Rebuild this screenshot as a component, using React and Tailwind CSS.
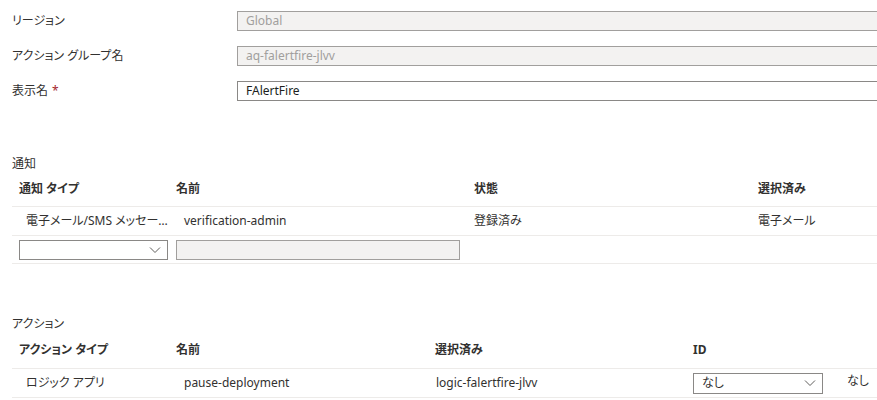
import React from 'react';

const font = "font-['Noto_Sans','Noto_Sans_CJK_JP',sans-serif] [font-feature-settings:'palt']";

function Chevron() {
  return (
    <svg width="12" height="8" viewBox="0 0 12 8" className="shrink-0">
      <path d="M1 1.5 L6 6.5 L11 1.5" fill="none" stroke="#605e5c" strokeWidth="1" />
    </svg>
  );
}

function FormRow({ label, value, disabled, required }) {
  return (
    <div className="flex items-center h-5">
      <div className="w-[237px] shrink-0 pl-3 text-[12px] text-[#323130]">
        {label}
        {required && <span className="text-[#a4262c] ml-1">*</span>}
      </div>
      <div
        className={
          'h-5 w-[680px] shrink-0 border flex items-center pl-[8px] text-[12px] ' +
          (disabled
            ? 'bg-[#f3f2f1] border-[#a19f9d] text-[#a19f9d]'
            : 'bg-white border-[#8a8886] text-[#201f1e]')
        }
      >
        {value}
      </div>
    </div>
  );
}

export default function App() {
  return (
    <div className={`w-[877px] h-[400px] overflow-hidden bg-white text-[#323130] ${font}`}>
      {/* 基本情報 */}
      <div className="pt-[11px] flex flex-col gap-[15px]">
        <FormRow label="リージョン" value="Global" disabled />
        <FormRow label="アクション グループ名" value="aq-falertfire-jlvv" disabled />
        <FormRow label="表示名" value="FAlertFire" required />
      </div>

      {/* 通知 */}
      <div className="mt-[55px] pl-3 h-4 flex items-center text-[12px]">通知</div>
      <div className="ml-3 text-[12px]">
        <div className="grid grid-cols-[157px_298px_284px_1fr] h-[35px] items-center border-b border-[#edebe9] font-bold">
          <div className="pl-[7px]">通知 タイプ</div>
          <div className="pl-[7px]">名前</div>
          <div className="pl-[7px]">状態</div>
          <div className="pl-[7px]">選択済み</div>
        </div>
        <div className="grid grid-cols-[157px_298px_284px_1fr] h-[29px] items-center border-b border-[#edebe9]">
          <div className="pl-[14px] truncate">電子メール/SMS メッセー…</div>
          <div className="pl-[15px]">verification-admin</div>
          <div className="pl-[7px]">登録済み</div>
          <div className="pl-[7px]">電子メール</div>
        </div>
        <div className="grid grid-cols-[157px_298px_284px_1fr] h-[28px] items-center border-b border-[#edebe9]">
          <div className="pl-[7px]">
            <div className="w-[149px] h-5 border border-[#8a8886] bg-white flex items-center justify-end pr-[6px]">
              <Chevron />
            </div>
          </div>
          <div className="pl-[7px]">
            <div className="w-[284px] h-5 border border-[#a19f9d] bg-[#f3f2f1]" />
          </div>
          <div />
          <div />
        </div>
      </div>

      {/* アクション */}
      <div className="mt-[52px] pl-3 h-4 flex items-center text-[12px]">アクション</div>
      <div className="ml-3 text-[12px]">
        <div className="grid grid-cols-[157px_259px_258px_1fr] h-[37px] items-center border-b border-[#edebe9] font-bold">
          <div className="pl-[7px]">アクション タイプ</div>
          <div className="pl-[7px]">名前</div>
          <div className="pl-[7px]">選択済み</div>
          <div className="pl-[7px]">ID</div>
        </div>
        <div className="grid grid-cols-[157px_259px_258px_1fr] h-[29px] items-center border-b border-[#edebe9]">
          <div className="pl-[14px]">ロジック アプリ</div>
          <div className="pl-[15px]">pause-deployment</div>
          <div className="pl-[8px]">logic-falertfire-jlvv</div>
          <div className="pl-[7px] flex items-center">
            <div className="w-[130px] h-[21px] border border-[#8a8886] bg-white flex items-center justify-between pl-[8px] pr-[6px]">
              <span>なし</span>
              <Chevron />
            </div>
            <span className="ml-[24px] -mt-[4px]">なし</span>
          </div>
        </div>
      </div>
    </div>
  );
}
